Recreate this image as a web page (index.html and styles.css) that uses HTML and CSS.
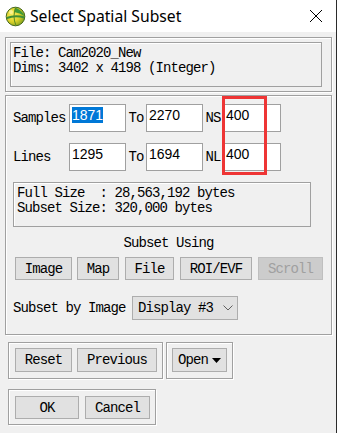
FILE: index.html
```html
<!DOCTYPE html>
<html lang="en">
  <head>
    <meta charset="UTF-8" />
    <meta name="viewport" content="width=device-width, initial-scale=1.0" />
    <title>Select Spatial Subset</title>
    <link rel="stylesheet" href="styles.css">
  </head>
  <body>
    <div class="window">
      <!-- Title bar -->
      <div class="titlebar">
        <svg class="app-icon" width="21" height="21" viewBox="0 0 21 21">
          <defs>
            <radialGradient id="globe" cx="35%" cy="40%" r="70%">
              <stop offset="0" stop-color="#f8ee60" />
              <stop offset="0.55" stop-color="#dcd22a" />
              <stop offset="1" stop-color="#7a9e1c" />
            </radialGradient>
          </defs>
          <circle cx="10.5" cy="10.5" r="9.3" fill="url(#globe)" stroke="#44661a" stroke-width="1" />
          <path d="M10 1.5 Q17 4 19.5 10 Q15 7 9 6 Z" fill="#3f9a3a" />
          <path d="M1.8 12 Q10 9 19.4 11.5" stroke="#3f8f36" stroke-width="2" fill="none" />
          <path d="M11 1.3 Q7 10 11 19.7" stroke="#5a8a22" stroke-width="1" fill="none" />
          <circle cx="6" cy="6" r="2" fill="#fff8b0" opacity="0.7" />
        </svg>
        <span class="title">Select Spatial Subset</span>
        <svg class="close" width="14" height="14" viewBox="0 0 14 14">
          <path d="M1 1 L13 13 M13 1 L1 13" stroke="#000" stroke-width="1" />
        </svg>
      </div>

      <div class="content">
        <!-- File info -->
        <div class="frame info-frame">
          <div class="file-info">File: Cam2020_New
Dims: 3402 x 4198 (Integer)</div>
        </div>

        <!-- Subset ranges -->
        <div class="frame main-frame">
          <div class="range-row">
            <span class="row-label">Samples</span>
            <div class="field"><span class="sel">1871</span></div>
            <span class="mid-label">To</span>
            <div class="field">2270</div>
            <span class="mid-label">NS</span>
            <div class="field wide">400</div>
          </div>
          <div class="range-row">
            <span class="row-label">Lines</span>
            <div class="field">1295</div>
            <span class="mid-label">To</span>
            <div class="field">1694</div>
            <span class="mid-label">NL</span>
            <div class="field wide">400</div>
          </div>

          <div class="size-box">Full Size  : 28,563,192 bytes
Subset Size: 320,000 bytes</div>

          <div class="subset-using">Subset Using</div>
          <div class="btn-row">
            <div class="btn w-image">Image</div>
            <div class="btn w-map">Map</div>
            <div class="btn w-file">File</div>
            <div class="btn w-roi">ROI/EVF</div>
            <div class="btn w-scroll disabled">Scroll</div>
          </div>

          <div class="by-image">
            <span class="by-label">Subset by Image</span>
            <div class="dropdown">
              <span>Display #3</span>
              <svg width="10" height="6" viewBox="0 0 10 6">
                <path d="M0.5 0.5 L5 5 L9.5 0.5" stroke="#606060" stroke-width="1" fill="none" />
              </svg>
            </div>
          </div>
        </div>

        <!-- Actions -->
        <div class="bottom-row">
          <div class="frame group-a">
            <div class="btn w-reset">Reset</div>
            <div class="btn w-prev">Previous</div>
          </div>
          <div class="frame group-b">
            <div class="btn w-open">Open
              <svg width="9" height="5" viewBox="0 0 9 5"><path d="M0 0 H9 L4.5 5 Z" fill="#000" /></svg>
            </div>
          </div>
        </div>
        <div class="frame group-c">
          <div class="btn w-ok">OK</div>
          <div class="btn w-cancel">Cancel</div>
        </div>
      </div>

      <!-- Annotation -->
      <div class="mark"></div>
    </div>
  </body>
</html>
```

FILE: styles.css
```css
/* General Reset */
* {
  margin: 0;
  padding: 0;
  box-sizing: border-box;
}

body {
  font-family: "Liberation Mono", monospace;
  font-size: 14px;
  letter-spacing: -0.9px;
  color: #000;
  background: #f0f0f0;
}

.window {
  position: relative;
  width: 337px;
  height: 433px;
  background: #f0f0f0;
  border-right: 1px solid #2b2b2b;
  overflow: hidden;
}

/* Title bar */
.titlebar {
  height: 32px;
  background: #fff;
  display: flex;
  align-items: center;
  padding-left: 5px;
}

.app-icon {
  margin-right: 4px;
}

.title {
  font-family: "Noto Sans", sans-serif;
  font-size: 15.7px;
  letter-spacing: 0;
}

.close {
  margin-left: auto;
  margin-right: 13px;
}

.content {
  padding: 5px 0 0 5px;
}

/* Frames */
.frame {
  border: 1px solid #a0a0a0;
  box-shadow: inset 1px 1px 0 #fff, 1px 1px 0 #fff;
}

.info-frame {
  width: 327px;
  height: 55px;
  padding: 4px;
}

.file-info {
  width: 312px;
  height: 45px;
  border: 1px solid #a0a0a0;
  box-shadow: inset 1px 1px 0 #fff;
  padding: 3px 2px;
  line-height: 15px;
  white-space: pre;
}

.main-frame {
  width: 327px;
  height: 240px;
  margin-top: 3px;
  padding: 8px 0 0 7px;
}

.range-row {
  display: flex;
  align-items: center;
  height: 28px;
}

.range-row + .range-row {
  margin-top: 11px;
}

.row-label {
  width: 56px;
}

.mid-label {
  width: 20px;
  text-align: center;
}

.field {
  width: 57px;
  height: 28px;
  background: #fff;
  border: 1px solid #a0a0a0;
  padding: 2px 0 0 2px;
  font-family: "Liberation Sans", sans-serif;
  font-size: 14px;
  letter-spacing: 0;
  line-height: 16px;
}

.field.wide {
  width: 58px;
}

.sel {
  background: #0078d7;
  color: #fff;
}

.size-box {
  width: 298px;
  height: 45px;
  margin-top: 11px;
  border: 1px solid #a0a0a0;
  box-shadow: inset 1px 1px 0 #fff;
  padding: 3px 3px;
  line-height: 15px;
  white-space: pre;
}

.subset-using {
  width: 311px;
  margin-top: 9px;
  line-height: 15px;
  text-align: center;
}

/* Buttons */
.btn-row {
  display: flex;
  margin-top: 6px;
  margin-left: 2px;
}

.btn {
  height: 23px;
  display: flex;
  align-items: center;
  justify-content: center;
  gap: 4px;
  background: #e1e1e1;
  border: 1px solid #adadad;
}

.btn.disabled {
  background: #cccccc;
  border-color: #bfbfbf;
  color: #a0a0a0;
}

.w-image { width: 57px; margin-right: 5px; }
.w-map { width: 42px; margin-right: 6px; }
.w-file { width: 49px; margin-right: 6px; }
.w-roi { width: 72px; margin-right: 6px; }
.w-scroll { width: 65px; }

.by-image {
  display: flex;
  align-items: center;
  margin-top: 16px;
}

.by-label {
  width: 119px;
}

.dropdown {
  width: 106px;
  height: 24px;
  display: flex;
  align-items: center;
  justify-content: space-between;
  padding: 0 4px 0 5px;
  background: #e1e1e1;
  border: 1px solid #adadad;
}

/* Bottom groups */
.bottom-row {
  display: flex;
  margin-top: 7px;
  margin-left: 3px;
}

.group-a {
  display: flex;
  gap: 5px;
  width: 155px;
  height: 37px;
  padding: 5px 5px 5px 6px;
}

.group-a .btn,
.group-b .btn {
  height: 24px;
}

.w-reset { width: 57px; }
.w-prev { width: 80px; }

.group-b {
  margin-left: 3px;
  width: 67px;
  height: 37px;
  padding: 5px;
}

.w-open { width: 55px; }

.group-c {
  display: flex;
  gap: 6px;
  width: 148px;
  height: 36px;
  margin: 10px 0 0 3px;
  padding: 6px 5px 5px 6px;
}

.w-ok { width: 64px; }
.w-cancel { width: 65px; }

/* Red annotation box */
.mark {
  position: absolute;
  left: 222px;
  top: 96px;
  width: 45px;
  height: 79px;
  border: 3px solid #ee3535;
}
```
